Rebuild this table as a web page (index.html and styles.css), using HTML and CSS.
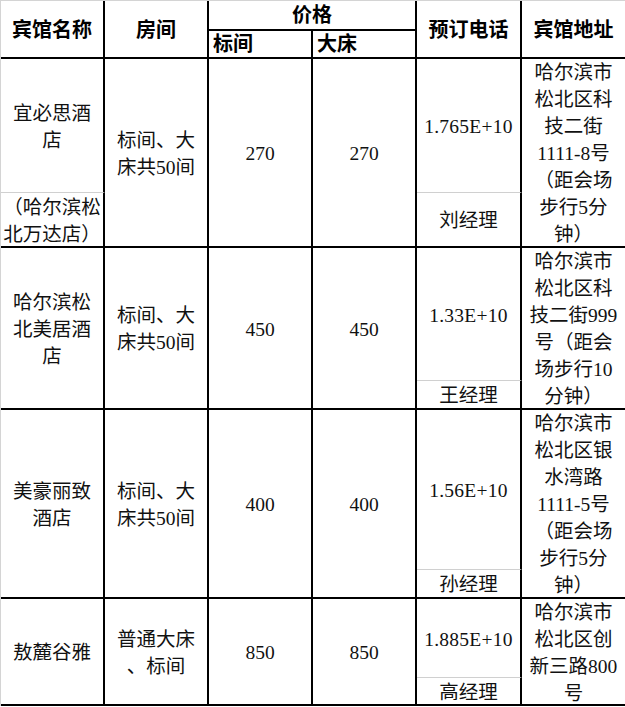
FILE: index.html
```html
<!DOCTYPE html>
<html lang="zh-CN">
<head>
<meta charset="utf-8">
<title>宾馆信息</title>
<link rel="stylesheet" href="styles.css">
</head>
<body>
<div class="sheet">
  <div class="c hd rs2">宾馆名称</div>
  <div class="c hd rs2">房间</div>
  <div class="c hd cs2">价格</div>
  <div class="c hd rs2">预订电话</div>
  <div class="c hd rs2 last">宾馆地址</div>
  <div class="c hd left">标间</div>
  <div class="c hd left">大床</div>

  <div class="c gray">宜必思酒<br>店</div>
  <div class="c rs2">标间、大<br>床共50间</div>
  <div class="c rs2">270</div>
  <div class="c rs2">270</div>
  <div class="c gray tel">1.765E+10</div>
  <div class="c rs2 last">哈尔滨市<br>松北区科<br>技二街<br>1111-8号<br>（距会场<br>步行5分<br>钟）</div>
  <div class="c">（哈尔滨松<br>北万达店）</div>
  <div class="c">刘经理</div>

  <div class="c rs2">哈尔滨松<br>北美居酒<br>店</div>
  <div class="c rs2">标间、大<br>床共50间</div>
  <div class="c rs2">450</div>
  <div class="c rs2">450</div>
  <div class="c gray tel">1.33E+10</div>
  <div class="c rs2 last">哈尔滨市<br>松北区科<br>技二街999<br>号（距会<br>场步行10<br>分钟）</div>
  <div class="c">王经理</div>

  <div class="c rs2">美豪丽致<br>酒店</div>
  <div class="c rs2">标间、大<br>床共50间</div>
  <div class="c rs2">400</div>
  <div class="c rs2">400</div>
  <div class="c gray tel">1.56E+10</div>
  <div class="c rs2 last">哈尔滨市<br>松北区银<br>水湾路<br>1111-5号<br>（距会场<br>步行5分<br>钟）</div>
  <div class="c">孙经理</div>

  <div class="c rs2">敖麓谷雅</div>
  <div class="c rs2">普通大床<br>、标间</div>
  <div class="c rs2">850</div>
  <div class="c rs2">850</div>
  <div class="c gray tel">1.885E+10</div>
  <div class="c rs2 last">哈尔滨市<br>松北区创<br>新三路800<br>号</div>
  <div class="c">高经理</div>
</div>
</body>
</html>
```

FILE: styles.css
```css
html, body {
  margin: 0;
  padding: 0;
  background: #fff;
  overflow: hidden;
}

.sheet {
  width: 625px;
  box-sizing: border-box;
  border-top: 1px solid #d4d4d4;
  border-left: 1px solid #d4d4d4;
  display: grid;
  grid-template-columns: 104px 104px 104px 104px 105px 103px;
  grid-template-rows: 30px 28px 134px 55px 133px 29px 160px 29px 79px 28px;
  font-family: "Liberation Serif", "Noto Sans CJK SC", serif;
  font-size: 19.5px;
  line-height: 27px;
  color: #111;
}

.c {
  box-sizing: border-box;
  border-right: 2px solid #000;
  border-bottom: 2px solid #000;
  display: flex;
  align-items: center;
  justify-content: center;
  text-align: center;
  overflow: hidden;
  white-space: nowrap;
  padding-top: 2px;
}

.c.last {
  border-right: none;
}

.c.gray {
  border-bottom: 1px solid #d0d0d0;
}

.tel {
  letter-spacing: 0.25px;
}

.rs2 {
  grid-row: span 2;
}

.cs2 {
  grid-column: span 2;
}

.hd {
  font-weight: 700;
  font-size: 20px;
  color: #000;
  padding-top: 3px;
}

.hd.left {
  justify-content: flex-start;
  padding-left: 4px;
  padding-top: 0;
}

.hd.cs2 {
  padding-top: 0;
}
```
